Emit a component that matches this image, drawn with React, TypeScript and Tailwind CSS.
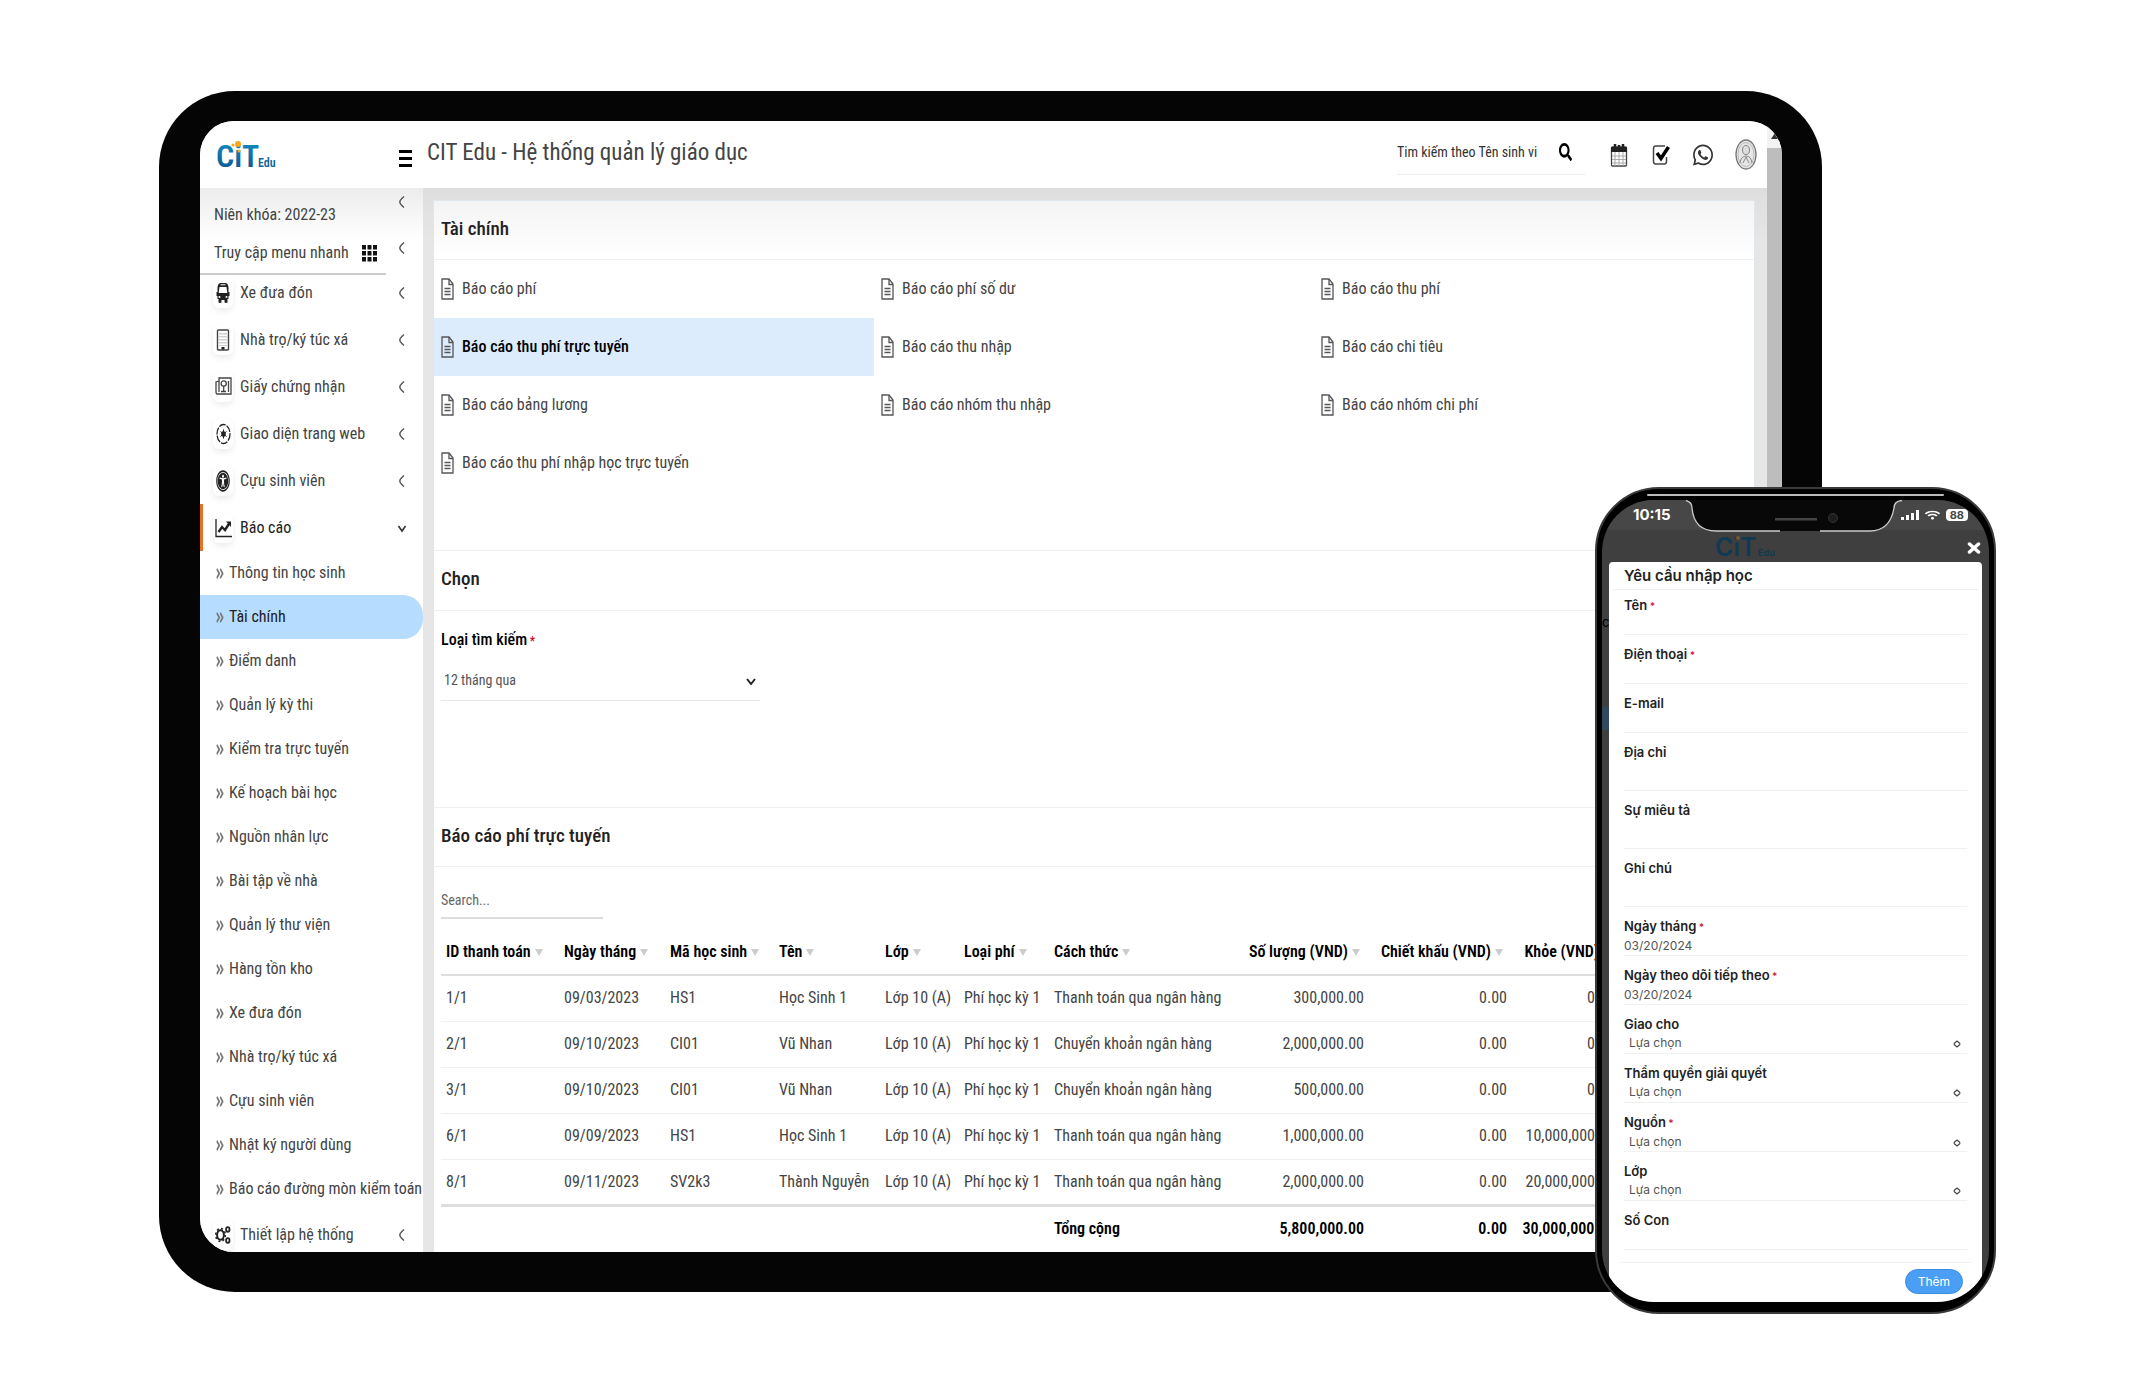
import React from 'react';
import { FaAngleDoubleRight, FaSearch, FaWhatsapp, FaUniversalAccess, FaWifi } from 'react-icons/fa';

/* ICONS */
const BusIcon = () => (
  <svg className="w-[14px] h-[22px]" viewBox="0 0 14 22">
    <path d="M4 1h6q2.500 1 2.500 5v4h1v4h-1v3h-1v3q0 1-1.500 1T8.500 20v-2h-3v2q0 1-1.500 1t-1.500-1v-3h-1v-3h-1v-4h1V6q0-4 2.500-5z" fill="#222" />
    <path d="M4.500 2.800h5" stroke="#fff" strokeWidth="1" />
    <path d="M3.500 5h7l.8 6H2.700z" fill="#fff" />
    <circle cx="3.500" cy="15" r="1" fill="#fff" />
    <circle cx="10.500" cy="15" r="1" fill="#fff" />
  </svg>
);

const BuildingIcon = () => (
  <svg className="w-[14px] h-[22px]" viewBox="0 0 14 22" fill="none" stroke="#444">
    <rect x="1.500" y="1" width="11" height="20" rx="1" strokeWidth="1.400" />
    <path d="M4 4v13M6 4v13M8 4v13M10 4v13" strokeDasharray="1.500 1.500" strokeWidth="1" opacity=".5" />
    <path d="M5.500 18h3v2.500h-3z" fill="#222" stroke="none" />
  </svg>
);

const CertificateIcon = () => (
  <svg className="w-[17px] h-[19px]" viewBox="0 0 17 19" fill="none" stroke="#444" strokeWidth="1.300">
    <path d="M4 1h12v16H2.500Q1 17 1 15V5l3-1z" />
    <path d="M4 4v11M13.500 4v11M6 14.500h5" />
    <circle cx="8.700" cy="6.500" r="2.600" />
    <path d="M8.700 9v5" />
  </svg>
);

const ThemeIcon = () => (
  <svg className="w-[15px] h-[22px]" viewBox="0 0 15 22" fill="none" stroke="#222">
    <ellipse cx="7.500" cy="11" rx="6.500" ry="9.500" strokeWidth="1.300" strokeDasharray="7 1.200" />
    <ellipse cx="7.500" cy="11" rx="1.800" ry="2.600" fill="#222" />
    <path d="M7.500 6.500v9M4.500 8.500l6 5M10.500 8.500l-6 5" strokeWidth="1" />
  </svg>
);

const AlumniIcon = () => <FaUniversalAccess preserveAspectRatio="none" className="w-[14px] h-[22px] text-[#222]" />;

const ChartIcon = () => (
  <svg className="w-[17px] h-[20px]" viewBox="0 0 17 20" fill="none" stroke="#222">
    <path d="M1 1v17.500h16" strokeWidth="1.300" />
    <path d="M3.500 14l3.500-5 3 3 4.500-7" strokeWidth="2.400" />
    <path d="M11 3.500h5v5.500z" fill="#222" stroke="none" />
  </svg>
);

const SettingsIcon = () => (
  <svg className="w-4 h-5" viewBox="0 0 16 20" fill="none" stroke="#222">
    <ellipse cx="5.500" cy="10" rx="3.400" ry="4.800" strokeWidth="2" />
    <ellipse cx="5.500" cy="10" rx="4.800" ry="6.400" strokeWidth="1.600" strokeDasharray="2 2.400" />
    <ellipse cx="12.800" cy="4.500" rx="1.700" ry="2.300" strokeWidth="1.800" />
    <ellipse cx="12.800" cy="15.500" rx="1.700" ry="2.300" strokeWidth="1.800" />
  </svg>
);

const FileIcon = () => (
  <svg className="w-[13px] h-[22px] shrink-0" viewBox="0 0 13 22" fill="none" stroke="#555" strokeWidth="1.300">
    <path d="M1 1h7l4 5v15H1z" />
    <path d="M8 1v5.500h4" />
    <path d="M3.500 10.500h6M3.500 13.500h6M3.500 16.500h6" />
  </svg>
);

const Chevron = ({ open }: { open?: boolean }) =>
  open ? (
    <svg className="w-2.5 h-3 shrink-0" viewBox="0 0 10 12" fill="none" stroke="#333" strokeWidth="1.600"><path d="M1.500 4L5 9l3.500-5" /></svg>
  ) : (
    <svg className="w-2.5 h-3 shrink-0" viewBox="0 0 10 12" fill="none" stroke="#555" strokeWidth="1.400"><path d="M7 0.500Q2 5 3 6Q2 7 7 11.500" /></svg>
  );

const CalendarIcon = () => (
  <svg className="w-5 h-6" viewBox="0 0 20 24">
    <rect x="2.500" y="4" width="15" height="19" fill="#fff" stroke="#444" strokeWidth="1.300" rx="1" />
    <path d="M2 4h16v5H2z" fill="#222" />
    <path d="M6 1v5M14 1v5M10 2v3" stroke="#222" strokeWidth="2.500" />
    <path d="M6 9v14M10 9v14M14 9v14M3 13h14M3 16.500h14M3 20h14" stroke="#aaa" strokeWidth="1" />
  </svg>
);

const CheckIcon = () => (
  <svg className="w-5 h-6" viewBox="0 0 20 24" fill="none">
    <path d="M14 3H4.500Q2.500 3 2.500 6v12q0 3 2 3h9q2 0 2-3v-4" stroke="#444" strokeWidth="1.500" />
    <path d="M6 10l4 5.500L17.500 4" stroke="#000" strokeWidth="3.500" />
  </svg>
);

const Avatar = () => (
  <svg className="w-[22px] h-[31px]" viewBox="0 0 22 31">
    <ellipse cx="11" cy="15.500" rx="10" ry="14.500" fill="#e6e6e6" stroke="#777" strokeWidth="1.300" />
    <ellipse cx="11" cy="15.500" rx="8" ry="12" fill="none" stroke="#bbb" />
    <ellipse cx="11" cy="11" rx="3.500" ry="4.500" fill="#ddd" stroke="#888" />
    <path d="M5 24q1-7 6-7t6 7M8 24l3-6 3 6" fill="none" stroke="#888" />
  </svg>
);

const Logo = () => (
  <svg className="w-[62px] h-12" viewBox="0 0 62 48" role="img" aria-label="CiT Edu">
    <defs>
      <linearGradient id="cit" x1="0" y1="0" x2="0" y2="1">
        <stop offset="0" stopColor="#1492c8" />
        <stop offset="1" stopColor="#0b4f86" />
      </linearGradient>
    </defs>
    <text x="0" y="36" fontFamily="Roboto Condensed" fontWeight="600" fontSize="32" fill="url(#cit)">CiT</text>
    <text x="42" y="36" fontFamily="Roboto Condensed" fontWeight="600" fontSize="12" fill="#13659b">Edu</text>
    <circle cx="22" cy="13" r="3" fill="#f7a81b" />
    <circle cx="17" cy="14" r="1.500" fill="#f7a81b" />
    <circle cx="23" cy="20" r="1.500" fill="#f7a81b" />
  </svg>
);

const DimLogo = () => (
  <svg className="w-[66px] h-8" viewBox="0 0 66 32" role="img" aria-label="CiT Edu">
    <text x="0" y="26" fontFamily="Inter" fontWeight="600" fontSize="25" fill="#0f3a52">CiT</text>
    <text x="43" y="26" fontFamily="Inter" fontWeight="700" fontSize="9" fill="#0f3a52">Edu</text>
    <circle cx="23" cy="8" r="2" fill="#6f5a2e" />
  </svg>
);

/* DATA */
const menu = [
  { label: 'Xe đưa đón', icon: BusIcon },
  { label: 'Nhà trọ/ký túc xá', icon: BuildingIcon },
  { label: 'Giấy chứng nhận', icon: CertificateIcon },
  { label: 'Giao diện trang web', icon: ThemeIcon },
  { label: 'Cựu sinh viên', icon: AlumniIcon },
  { label: 'Báo cáo', icon: ChartIcon, open: true },
];

const subMenu = [
  'Thông tin học sinh', 'Tài chính', 'Điểm danh', 'Quản lý kỳ thi', 'Kiểm tra trực tuyến', 'Kế hoạch bài học',
  'Nguồn nhân lực', 'Bài tập về nhà', 'Quản lý thư viện', 'Hàng tồn kho', 'Xe đưa đón', 'Nhà trọ/ký túc xá',
  'Cựu sinh viên', 'Nhật ký người dùng', 'Báo cáo đường mòn kiểm toán',
];

const reports = [
  'Báo cáo phí', 'Báo cáo phí số dư', 'Báo cáo thu phí', 'Báo cáo thu phí trực tuyến', 'Báo cáo thu nhập',
  'Báo cáo chi tiêu', 'Báo cáo bảng lương', 'Báo cáo nhóm thu nhập', 'Báo cáo nhóm chi phí', 'Báo cáo thu phí nhập học trực tuyến',
];

const columns = ['ID thanh toán', 'Ngày tháng', 'Mã học sinh', 'Tên', 'Lớp', 'Loại phí', 'Cách thức', 'Số lượng (VND)', 'Chiết khấu (VND)', 'Khỏe (VND)'];

const rows = [
  ['1/1', '09/03/2023', 'HS1', 'Học Sinh 1', 'Lớp 10 (A)', 'Phí học kỳ 1', 'Thanh toán qua ngân hàng', '300,000.00', '0.00', '0.00'],
  ['2/1', '09/10/2023', 'CI01', 'Vũ Nhan', 'Lớp 10 (A)', 'Phí học kỳ 1', 'Chuyển khoản ngân hàng', '2,000,000.00', '0.00', '0.00'],
  ['3/1', '09/10/2023', 'CI01', 'Vũ Nhan', 'Lớp 10 (A)', 'Phí học kỳ 1', 'Chuyển khoản ngân hàng', '500,000.00', '0.00', '0.00'],
  ['6/1', '09/09/2023', 'HS1', 'Học Sinh 1', 'Lớp 10 (A)', 'Phí học kỳ 1', 'Thanh toán qua ngân hàng', '1,000,000.00', '0.00', '10,000,000.00'],
  ['8/1', '09/11/2023', 'SV2k3', 'Thành Nguyễn', 'Lớp 10 (A)', 'Phí học kỳ 1', 'Thanh toán qua ngân hàng', '2,000,000.00', '0.00', '20,000,000.00'],
];

type Field = { id: string; label: string; required?: boolean; value?: string; kind?: 'select' | 'area' };

const fields: Field[] = [
  { id: 'name', label: 'Tên', required: true },
  { id: 'phone', label: 'Điện thoại', required: true },
  { id: 'email', label: 'E-mail' },
  { id: 'address', label: 'Địa chỉ', kind: 'area' },
  { id: 'description', label: 'Sự miêu tả', kind: 'area' },
  { id: 'note', label: 'Ghi chú', kind: 'area' },
  { id: 'date', label: 'Ngày tháng', required: true, value: '03/20/2024' },
  { id: 'follow', label: 'Ngày theo dõi tiếp theo', required: true, value: '03/20/2024' },
  { id: 'assigned', label: 'Giao cho', kind: 'select' },
  { id: 'reference', label: 'Thẩm quyền giải quyết', kind: 'select' },
  { id: 'source', label: 'Nguồn', required: true, kind: 'select' },
  { id: 'class', label: 'Lớp', kind: 'select' },
  { id: 'children', label: 'Số Con' },
];

function Header() {
  return (
    <header className="flex h-[67px] items-center bg-white pl-4 pr-2.5">
      <Logo />
      <button type="button" aria-label="Menu" className="ml-[121px] mt-2 flex w-[13px] flex-col gap-1">
        <span className="h-[3px] bg-black" />
        <span className="h-[3px] bg-black" />
        <span className="h-[3px] bg-black" />
      </button>
      <h1 className="ml-[15px] flex-1 whitespace-nowrap text-[23px] leading-8 pb-1">CIT Edu - Hệ thống quản lý giáo dục</h1>
      <div className="flex items-center gap-[22px]">
        <div className="mr-0.5 flex h-10 w-[188px] items-center border-b border-[#eee] pb-1">
          <input aria-label="Tìm kiếm" placeholder="Tim kiếm theo Tên sinh vi" className="w-[162px] text-[14px] placeholder-[#333] outline-none" />
          <button type="button" aria-label="Tìm"><FaSearch preserveAspectRatio="none" className="w-[13px] h-[18px] text-black" /></button>
        </div>
        <button type="button" aria-label="Lịch"><CalendarIcon /></button>
        <button type="button" aria-label="Việc cần làm"><CheckIcon /></button>
        <button type="button" aria-label="WhatsApp"><FaWhatsapp preserveAspectRatio="none" className="w-5 h-6 text-[#333]" /></button>
        <button type="button" aria-label="Tài khoản"><Avatar /></button>
      </div>
    </header>
  );
}

function MenuItem({ label, icon: Icon, open }: { label: string; icon: React.ComponentType; open?: boolean }) {
  return (
    <a href="#" className={`flex h-[47px] items-center pr-4 ${open ? 'border-l-[3px] border-[#e8711f] pl-2.5 text-[#222]' : 'pl-[13px]'}`}>
      <span className="flex h-[30px] w-[20px] items-center justify-center rounded-md bg-white shadow-[0_3px_6px_rgba(0,0,0,0.08)]"><Icon /></span>
      <span className="ml-[7px] flex-1 whitespace-nowrap">{label}</span>
      <Chevron open={open} />
    </a>
  );
}

function Sidebar() {
  return (
    <aside className="w-[223px] shrink-0 bg-white">
      <div className="flex h-[87px] bg-gradient-to-b from-[#ececec] to-white to-60%">
        <div className="w-[186px] border-b-2 border-[#ccc] pl-3.5 pt-2">
          <p className="flex h-[38px] items-center">Niên khóa: 2022-23</p>
          <p className="flex h-[38px] items-center justify-between whitespace-nowrap pr-[9px]">
            Truy cập menu nhanh
            <svg className="h-[17px] w-[15px]" viewBox="0 0 15 17">
              {[0, 1, 2].map((r) => [0, 1, 2].map((c) => <rect key={`${r}${c}`} x={c * 5.5} y={r * 6} width="4" height="4.500" fill="#111" />))}
            </svg>
          </p>
        </div>
        <div className="flex flex-1 flex-col items-end gap-[34px] pr-4 pt-2">
          <Chevron />
          <Chevron />
        </div>
      </div>
      <nav className="-mt-1.5 -mb-[7px]">
        {menu.map((item) => <MenuItem key={item.label} {...item} />)}
        {subMenu.map((label) => (
          <a key={label} href="#" className={`flex h-11 items-center gap-[5px] whitespace-nowrap pl-4 ${label === 'Tài chính' ? 'rounded-r-[20px] bg-[#b6ddff] text-[#222]' : ''}`}>
            <FaAngleDoubleRight preserveAspectRatio="none" className="h-[17px] w-2 text-[#777]" />
            {label}
          </a>
        ))}
        <MenuItem label="Thiết lập hệ thống" icon={SettingsIcon} />
      </nav>
    </aside>
  );
}

function FeeTable() {
  return (
    <table className="mt-2.5 w-full table-fixed border-collapse whitespace-nowrap">
      <colgroup>
        <col className="w-[118px]" />
        <col className="w-[106px]" />
        <col className="w-[109px]" />
        <col className="w-[106px]" />
        <col className="w-[79px]" />
        <col className="w-[90px]" />
        <col className="w-[197px]" />
        <col className="w-[123px]" />
        <col className="w-[143px]" />
        <col className="w-[108px]" />
        <col />
      </colgroup>
      <thead>
        <tr className="h-[46px] border-b-2 border-[#ddd] text-black">
          {columns.map((name, i) => (
            <th key={name} scope="col" className={`font-semibold ${i > 6 ? 'pr-[9px] text-right' : 'px-[5px] text-left'}`}>
              {name}
              <svg className="ml-1 inline h-[7px] w-2" viewBox="0 0 8 7"><path d="M0 0h8L4 7z" fill="#ccc" /></svg>
            </th>
          ))}
          <td />
        </tr>
      </thead>
      <tbody>
        {rows.map((row) => (
          <tr key={row[0]} className="h-[46px] border-b border-[#f1f1f1] last:border-b-0">
            {row.map((cell, i) => <td key={i} className={`px-[5px] ${i > 6 ? 'text-right' : ''}`}>{cell}</td>)}
            <td />
          </tr>
        ))}
      </tbody>
      <tfoot>
        <tr className="h-[47px] border-t-[3px] border-[#ddd] font-semibold text-black">
          <td colSpan={6} />
          <td className="px-[5px]">Tổng cộng</td>
          <td className="px-[5px] text-right">5,800,000.00</td>
          <td className="px-[5px] text-right">0.00</td>
          <td className="px-[5px] text-right">30,000,000.00</td>
          <td />
        </tr>
      </tfoot>
    </table>
  );
}

function Content() {
  return (
    <main className="flex-1 bg-gradient-to-b from-[#dedede] to-[#e6e6e6] to-5% pl-2.5 pr-3 pt-3">
      <section className="bg-white border border-b-0 border-[#dfe6ec]">
        <h2 className="flex h-[59px] items-center border-b border-[#f0f0f0] bg-gradient-to-b from-[#f4f4f4] to-white px-[7px] pb-0.5 text-[19px] font-medium text-[#222]">Tài chính</h2>
        <ul className="grid h-[290px] grid-cols-3 content-start">
          {reports.map((label, i) => (
            <li key={label}>
              <a href="#" className={`flex h-[58px] items-center gap-2 px-[7px] ${i === 3 ? 'bg-[#dcecfd] font-medium text-black' : ''}`}>
                <FileIcon />
                {label}
              </a>
            </li>
          ))}
        </ul>

        <h2 className="flex h-[61px] items-center border-y border-[#f0f0f0] px-[7px] pb-0.5 text-[19px] font-medium text-[#222]">Chọn</h2>
        <div className="flex h-[196px] flex-col items-start px-[7px] pt-[17px]">
          <label htmlFor="range" className="font-medium leading-6 text-black">Loại tìm kiếm<span className="text-[12px] text-red-600"> *</span></label>
          <div className="relative mt-2 w-[319px]">
            <select id="range" className="h-10 w-full appearance-none border-b border-[#e8e8e8] bg-white pl-[3px] text-[14px] text-[#555] outline-none">
              <option>12 tháng qua</option>
            </select>
            <svg className="pointer-events-none absolute right-1 top-4 h-2.5 w-2.5" viewBox="0 0 10 10" fill="none" stroke="#222" strokeWidth="2"><path d="M1 2l4 5 4-5" /></svg>
          </div>
        </div>

        <h2 className="flex h-[60px] items-center border-y border-[#f0f0f0] px-[7px] pb-0.5 text-[19px] font-medium text-[#222]">Báo cáo phí trực tuyến</h2>
        <div className="px-[7px] pt-4">
          <input aria-label="Search" placeholder="Search..." className="block h-9 w-[162px] border-b-2 border-[#ddd] text-[14px] placeholder-[#666] outline-none" />
          <FeeTable />
        </div>
      </section>
    </main>
  );
}

function FormField({ id, label, required, value, kind }: Field) {
  const control = 'w-full min-h-0 flex-1 border-b border-[#f1f1f1] bg-transparent text-[12px] text-[#555] outline-none';
  return (
    <div className={`flex flex-col pt-2.5 ${kind === 'area' ? 'h-[58px]' : 'h-[49px]'}`}>
      <label htmlFor={id} className="text-[13px] font-semibold leading-[18px] text-[#222]">
        {label}
        {required && <span className="text-[10px] text-[#d0203a]"> *</span>}
      </label>
      {kind === 'select' ? (
        <div className="relative flex flex-1">
          <select id={id} className={`${control} appearance-none pl-[5px]`}>
            <option>Lựa chọn</option>
          </select>
          <svg className="pointer-events-none absolute right-1.5 top-[7px] h-2 w-2" viewBox="0 0 8 8" fill="none" stroke="#444" strokeWidth="1.200"><path d="M0.800 3.700L4 1l3.200 2.700M0.800 4.300L4 7l3.200-2.700" /></svg>
        </div>
      ) : kind === 'area' ? (
        <textarea id={id} className={`${control} resize-none`} />
      ) : (
        <input id={id} defaultValue={value} className={control} />
      )}
    </div>
  );
}

function Phone() {
  return (
    <div className="absolute right-[158px] top-[487px] w-[401px] rounded-[64px] border-2 border-[#3a3a3a] bg-black px-[5px] pb-2.5 pt-[11px] font-[Inter,sans-serif]">
      <div className="absolute left-[50px] right-[50px] top-[5px] h-0.5 rounded-full bg-[#bbb]" />
      <div className="relative overflow-hidden rounded-[52px] bg-[#3f3f3f]">
        {/* STATUS BAR */}
        <div className="flex h-[30px] items-center justify-between bg-[#474747] pl-[31px] pr-[21px] text-white">
          <span className="text-[15px] font-bold leading-6">10:15</span>
          <div className="flex items-center gap-1.5">
            <svg className="h-2.5 w-[18px]" viewBox="0 0 18 10" fill="#fff"><path d="M0 7h3v3H0zM5 5h3v5H5zM10 3h3v7h-3zM15 0h3v10h-3z" /></svg>
            <FaWifi preserveAspectRatio="none" className="h-2.5 w-[15px]" />
            <span className="rounded-[4px] bg-white px-1 text-[11px] font-bold leading-3 text-[#474747]">88</span>
          </div>
        </div>
        <svg className="absolute left-[84px] top-0 h-[34px] w-[216px]" viewBox="0 0 216 34">
          <path d="M0 0Q6 2 6 8Q8 31 30 31H184Q204 31 208 8Q208 1 216 0z" fill="#080808" />
          <path d="M0 0.500Q6 2 6 8Q8 31 30 31H94M134 31H184Q204 31 208 8Q208 1 216 0.500" fill="none" stroke="#ccc" strokeWidth="1.300" />
          <rect x="89" y="18" width="42" height="2.500" fill="#444" />
          <circle cx="147" cy="18" r="4.500" fill="#1d1d1d" stroke="#333" />
        </svg>

        <div className="relative flex h-8 items-center pl-[113px]">
          <DimLogo />
          <button type="button" aria-label="Đóng" className="absolute right-2 top-3">
            <svg className="h-3 w-[14px]" viewBox="0 0 14 12" fill="none" stroke="#fff" strokeWidth="3.500" strokeLinecap="round"><path d="M2.500 2l9 8M11.500 2l-9 8" /></svg>
          </button>
        </div>

        {/* DIMMED PAGE BEHIND THE DIALOG */}
        <span className="absolute left-0 top-[112px] text-[13px] leading-5 text-black">c</span>
        <span className="absolute left-0 top-[207px] h-[23px] w-2 bg-[#2f4a5e]" />

        <form className="relative mx-[7px] rounded-t-[4px] bg-white" onSubmit={(e) => e.preventDefault()}>
          <h2 className="mx-1 border-b border-[#eee] pl-[11px] text-[15px] font-semibold leading-[27px] text-[#222]">Yêu cầu nhập học</h2>
          <div className="-mt-1 px-[15px]">
            {fields.map((field) => <FormField key={field.id} {...field} />)}
          </div>
          <div className="mx-2.5 mt-3 flex h-10 items-start justify-end border-t border-[#f3f3f3] pr-[9px] pt-1.5">
            <button type="submit" className="h-[25px] rounded-full border border-[#3c8de0] bg-[#4a9ff5] px-3 text-[12px] leading-5 text-white">Thêm</button>
          </div>
        </form>
      </div>
    </div>
  );
}

export default function App() {
  return (
    <div className="relative min-h-screen bg-white pb-[91px] pl-[159px] pr-[332px] pt-[91px] font-['Roboto_Condensed',Roboto,sans-serif] text-[16px] text-[#444]">
      <div className="rounded-[76px] bg-[#050505] pb-10 pl-[41px] pr-10 pt-[30px]">
        <div className="flex overflow-hidden rounded-[34px] bg-white">
          <div className="flex min-w-0 flex-1 flex-col">
            <Header />
            <div className="flex flex-1">
              <Sidebar />
              <Content />
            </div>
          </div>
          {/* SCROLLBAR */}
          <div className="flex w-[15px] flex-col bg-[#bdbdbd]">
            <div className="flex h-[27px] items-center justify-center bg-[#f3f3f3]">
              <svg className="h-2 w-2" viewBox="0 0 8 8"><path d="M4 2l4 6H0z" fill="#333" /></svg>
            </div>
          </div>
        </div>
      </div>
      <Phone />
    </div>
  );
}
